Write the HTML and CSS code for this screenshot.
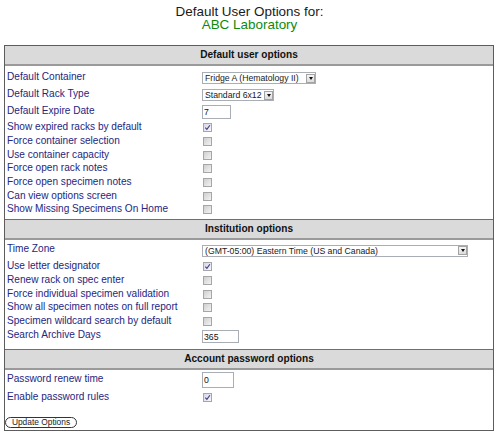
FILE: index.html
```html
<!DOCTYPE html>
<html lang="en">
<head>
<meta charset="utf-8">
<title>Default User Options</title>
<link rel="stylesheet" href="styles.css">
</head>
<body>
<div class="title">
  <div class="title-line">Default User Options for:</div>
  <div class="title-org">ABC Laboratory</div>
</div>
<form class="panel" onsubmit="return false">
  <section class="sect">
    <div class="sect-head">Default user options</div>
    <div class="sect-body s1">
      <div class="row h18">
        <label class="lbl lbl-up">Default Container</label>
        <div class="ctrl"><span class="sel w-fridge"><span class="sel-text">Fridge A (Hematology II)</span><span class="sel-btn"></span></span></div>
      </div>
      <div class="row h16">
        <label class="lbl lbl-up">Default Rack Type</label>
        <div class="ctrl"><span class="sel w-rack"><span class="sel-text">Standard 6x12</span><span class="sel-btn"></span></span></div>
      </div>
      <div class="row h18">
        <label class="lbl lbl-up">Default Expire Date</label>
        <div class="ctrl"><input class="txt w-expire" type="text" value="7"></div>
      </div>
      <div class="row hchk">
        <label class="lbl">Show expired racks by default</label>
        <div class="ctrl"><span class="cb on"><svg viewBox="0 0 7 7" width="7" height="7"><path d="M1.3 3.6 L2.9 5.4 L5.9 1.2" fill="none" stroke="#3d3d8c" stroke-width="1.1"/></svg></span></div>
      </div>
      <div class="row hchk">
        <label class="lbl">Force container selection</label>
        <div class="ctrl"><span class="cb"></span></div>
      </div>
      <div class="row hchk">
        <label class="lbl">Use container capacity</label>
        <div class="ctrl"><span class="cb"></span></div>
      </div>
      <div class="row hchk">
        <label class="lbl">Force open rack notes</label>
        <div class="ctrl"><span class="cb"></span></div>
      </div>
      <div class="row hchk">
        <label class="lbl">Force open specimen notes</label>
        <div class="ctrl"><span class="cb"></span></div>
      </div>
      <div class="row hchk">
        <label class="lbl">Can view options screen</label>
        <div class="ctrl"><span class="cb"></span></div>
      </div>
      <div class="row hchk">
        <label class="lbl">Show Missing Specimens On Home</label>
        <div class="ctrl"><span class="cb"></span></div>
      </div>
    </div>
  </section>
  <section class="sect">
    <div class="sect-head">Institution options</div>
    <div class="sect-body s2">
      <div class="row h18">
        <label class="lbl lbl-up">Time Zone</label>
        <div class="ctrl"><span class="sel w-tz"><span class="sel-text">(GMT-05:00) Eastern Time (US and Canada)</span><span class="sel-btn"></span></span></div>
      </div>
      <div class="row hchk">
        <label class="lbl">Use letter designator</label>
        <div class="ctrl"><span class="cb on"><svg viewBox="0 0 7 7" width="7" height="7"><path d="M1.3 3.6 L2.9 5.4 L5.9 1.2" fill="none" stroke="#3d3d8c" stroke-width="1.1"/></svg></span></div>
      </div>
      <div class="row hchk">
        <label class="lbl">Renew rack on spec enter</label>
        <div class="ctrl"><span class="cb"></span></div>
      </div>
      <div class="row hchk">
        <label class="lbl">Force individual specimen validation</label>
        <div class="ctrl"><span class="cb"></span></div>
      </div>
      <div class="row hchk">
        <label class="lbl">Show all specimen notes on full report</label>
        <div class="ctrl"><span class="cb"></span></div>
      </div>
      <div class="row hchk">
        <label class="lbl">Specimen wildcard search by default</label>
        <div class="ctrl"><span class="cb"></span></div>
      </div>
      <div class="row h165">
        <label class="lbl lbl-up">Search Archive Days</label>
        <div class="ctrl"><input class="txt w-archive" type="text" value="365"></div>
      </div>
    </div>
  </section>
  <section class="sect">
    <div class="sect-head">Account password options</div>
    <div class="sect-body s3">
      <div class="row h18">
        <label class="lbl">Password renew time</label>
        <div class="ctrl"><input class="txt w-pw" type="text" value="0"></div>
      </div>
      <div class="row h17">
        <label class="lbl">Enable password rules</label>
        <div class="ctrl"><span class="cb on"><svg viewBox="0 0 7 7" width="7" height="7"><path d="M1.3 3.6 L2.9 5.4 L5.9 1.2" fill="none" stroke="#3d3d8c" stroke-width="1.1"/></svg></span></div>
      </div>
      <div class="btn-row">
        <button class="btn" type="submit">Update Options</button>
      </div>
    </div>
  </section>
</form>
</body>
</html>
```

FILE: styles.css
```css
body {
  margin: 0;
  background: #fff;
  font-family: "Liberation Sans", Arial, sans-serif;
}

.title {
  padding-top: 4.5px;
  text-align: center;
  font-size: 13.44px;
  line-height: 13.5px;
  color: #1a1a1a;
}

.title-org {
  color: #0c8a0c;
}

.panel {
  width: 490px;
  margin: 13.5px 0 0 4px;
  border: 1px solid #5c5c5c;
  box-sizing: border-box;
}

.sect-head {
  height: 18px;
  line-height: 18px;
  background: #dadada;
  border-bottom: 2px solid #9a9a9a;
  text-align: center;
  font-weight: bold;
  font-size: 10.1px;
  color: #111;
}

.sect + .sect .sect-head {
  border-top: 1px solid #6e6e6e;
}

.s1 { padding: 3px 0 2px; }
.s2 { padding: 2px 0 4px; }
.s3 { padding: 1px 0 2px; }

.row {
  display: grid;
  grid-template-columns: 197px 1fr;
  align-items: center;
}

.h18 { height: 18px; }
.h17 { height: 17px; }
.h16 { height: 16px; }
.h165 { height: 16.5px; }
.hchk { height: 13.7px; }

.lbl {
  padding: 0 0 1px 2px;
  font-size: 10.1px;
  line-height: 12px;
  color: #262680;
  white-space: nowrap;
}

.lbl-up {
  padding-bottom: 3px;
}

.ctrl {
  display: flex;
  align-items: center;
}

.sel {
  display: flex;
  align-items: center;
  height: 12px;
  box-sizing: border-box;
  border: 1px solid #a9aeb5;
  background: #fff;
  padding-left: 2px;
  font-size: 8.7px;
  color: #1a1a1a;
}

.sel-text {
  flex: 1;
  white-space: nowrap;
  overflow: hidden;
  line-height: 10px;
}

.sel-btn {
  width: 9px;
  height: 9px;
  margin-right: 0;
  box-sizing: border-box;
  border: 1px solid #a3a3a3;
  background: linear-gradient(#f6f6f6, #dcdcdc);
  display: flex;
  align-items: center;
  justify-content: center;
}

.sel-btn::after {
  content: "";
  border-left: 2.5px solid transparent;
  border-right: 2.5px solid transparent;
  border-top: 3px solid #111;
}

.w-fridge { width: 114px; }
.w-rack { width: 72px; }
.w-tz { width: 266px; }

.txt {
  box-sizing: border-box;
  height: 14px;
  margin: 0;
  padding: 0 0 0 1px;
  border: 1px solid #a9aeb5;
  background: #fff;
  font-family: "Liberation Sans", Arial, sans-serif;
  font-size: 8.7px;
  color: #111;
  outline: none;
}

.w-expire { width: 29px; }
.w-archive { width: 37px; height: 13px; }
.w-pw { width: 32px; height: 16px; }

.cb {
  width: 9px;
  height: 9px;
  margin-left: 1px;
  box-sizing: border-box;
  border: 1px solid #a6a6a6;
  background: linear-gradient(135deg, #cfcfcf, #f3f3f3);
  display: flex;
  align-items: center;
  justify-content: center;
}

.cb.on {
  background: linear-gradient(135deg, #d8d8e6, #f6f6fa);
}

.btn-row {
  display: flex;
  padding-top: 11px;
}

.btn {
  width: 72px;
  height: 11px;
  margin: 0;
  padding: 0;
  box-sizing: border-box;
  border: 1px solid #333;
  border-radius: 6px;
  background: #fff;
  font-family: "Liberation Sans", Arial, sans-serif;
  font-size: 8.4px;
  line-height: 9px;
  color: #222;
}
```
